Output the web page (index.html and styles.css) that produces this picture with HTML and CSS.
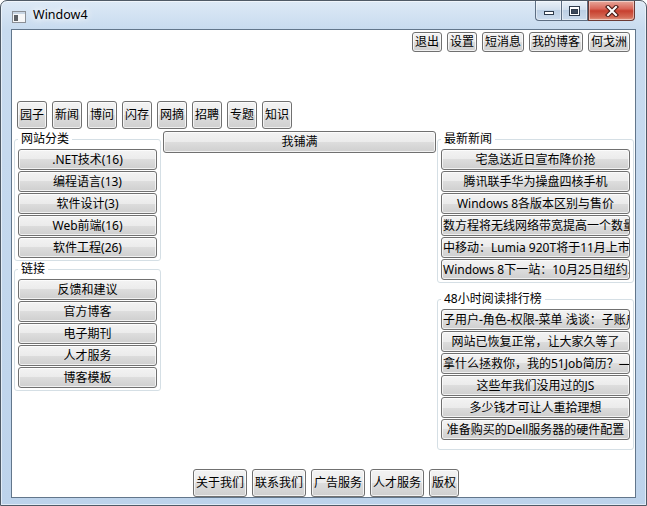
FILE: index.html
```html
<!DOCTYPE html>
<html lang="zh-CN">
<head>
<meta charset="utf-8">
<title>Window4</title>
<link rel="stylesheet" href="styles.css">
</head>
<body>
<div class="window">
  <div class="titlebar">
    <svg class="app-icon" width="14" height="12" viewBox="0 0 14 12">
      <rect x="0.5" y="0.5" width="13" height="11" fill="#f6f7f8" stroke="#8a8f96"/>
      <rect x="1" y="1" width="12" height="2" fill="#c9d6e4"/>
      <rect x="2" y="4" width="4" height="6" fill="#5d6166"/>
    </svg>
    <span class="title">Window4</span>
    <div class="caption">
      <div class="cap cap-min">
        <svg width="12" height="6" viewBox="0 0 12 6"><rect x="1.5" y="1.5" width="9" height="3" fill="#fff" stroke="#2e3b4c"/></svg>
      </div>
      <div class="cap cap-max">
        <svg width="11" height="10" viewBox="0 0 11 10"><rect x="0.5" y="0.5" width="10" height="9" fill="#fff" stroke="#2e3b4c"/><rect x="2.5" y="3.5" width="6" height="4" fill="#3d4a5c" stroke="#2e3b4c"/></svg>
      </div>
      <div class="cap cap-close">
        <svg width="14" height="12" viewBox="0 0 14 12"><path d="M3 2 L11 10 M11 2 L3 10" stroke="#4a1c16" stroke-width="4.2" stroke-linecap="square" fill="none"/><path d="M3 2 L11 10 M11 2 L3 10" stroke="#fff" stroke-width="2" stroke-linecap="square" fill="none"/></svg>
      </div>
    </div>
  </div>
  <div class="client">
    <div class="topbar">
      <div class="btn">退出</div>
      <div class="btn">设置</div>
      <div class="btn">短消息</div>
      <div class="btn">我的博客</div>
      <div class="btn">何戈洲</div>
    </div>
    <div class="nav">
      <div class="btn">园子</div>
      <div class="btn">新闻</div>
      <div class="btn">博问</div>
      <div class="btn">闪存</div>
      <div class="btn">网摘</div>
      <div class="btn">招聘</div>
      <div class="btn">专题</div>
      <div class="btn">知识</div>
    </div>
    <div class="main">
      <div class="col-left">
        <fieldset class="group">
          <legend>网站分类</legend>
          <div class="btn row">.NET技术(16)</div>
          <div class="btn row">编程语言(13)</div>
          <div class="btn row">软件设计(3)</div>
          <div class="btn row">Web前端(16)</div>
          <div class="btn row">软件工程(26)</div>
        </fieldset>
        <fieldset class="group">
          <legend>链接</legend>
          <div class="btn row">反馈和建议</div>
          <div class="btn row">官方博客</div>
          <div class="btn row">电子期刊</div>
          <div class="btn row">人才服务</div>
          <div class="btn row">博客模板</div>
        </fieldset>
      </div>
      <div class="col-mid">
        <div class="btn fill-btn">我铺满</div>
      </div>
      <div class="col-right">
        <fieldset class="group">
          <legend>最新新闻</legend>
          <div class="btn row">宅急送近日宣布降价抢</div>
          <div class="btn row">腾讯联手华为操盘四核手机</div>
          <div class="btn row">Windows 8各版本区别与售价</div>
          <div class="btn row">数方程将无线网络带宽提高一个数量级</div>
          <div class="btn row">中移动：Lumia 920T将于11月上市</div>
          <div class="btn row">Windows 8下一站：10月25日纽约发布</div>
        </fieldset>
        <fieldset class="group group-tall">
          <legend>48小时阅读排行榜</legend>
          <div class="btn row">子用户-角色-权限-菜单 浅谈：子账户设计方案</div>
          <div class="btn row">网站已恢复正常，让大家久等了</div>
          <div class="btn row">拿什么拯救你，我的51Job简历？——求职有感</div>
          <div class="btn row">这些年我们没用过的JS</div>
          <div class="btn row">多少钱才可让人重拾理想</div>
          <div class="btn row">准备购买的Dell服务器的硬件配置</div>
        </fieldset>
      </div>
    </div>
    <div class="footer">
      <div class="btn">关于我们</div>
      <div class="btn">联系我们</div>
      <div class="btn">广告服务</div>
      <div class="btn">人才服务</div>
      <div class="btn">版权</div>
    </div>
  </div>
</div>
</body>
</html>
```
FILE: styles.css
```css
* { box-sizing: border-box; }
html, body { margin: 0; padding: 0; }
body {
  width: 647px;
  height: 506px;
  overflow: hidden;
  background: #fff;
  font-family: "Noto Sans", "Noto Sans CJK SC", sans-serif;
  font-size: 12px;
  color: #000;
}

.window {
  width: 647px;
  height: 506px;
  border: 1px solid #4f5a66;
  border-radius: 7px 7px 0 0;
  background: linear-gradient(180deg, #dde9f6 0, #c8dbef 28px, #bdd3eb 100%);
  box-shadow: inset 0 0 0 1px rgba(255, 255, 255, 0.55);
  display: flex;
  flex-direction: column;
}

.titlebar {
  flex: none;
  height: 28px;
  display: flex;
  align-items: flex-start;
  padding-left: 11px;
}
.app-icon { margin-top: 10px; flex: none; }
.title {
  margin: 6px 0 0 7px;
  line-height: 16px;
  font-size: 12.5px;
  text-shadow: 0 0 6px #fff, 0 0 10px #fff;
}

.caption {
  margin-left: auto;
  margin-right: 11px;
  display: flex;
  height: 20px;
}
.cap {
  height: 20px;
  border: 1px solid #5d6e83;
  border-top: none;
  display: flex;
  align-items: center;
  justify-content: center;
  background: linear-gradient(180deg, #eaf1f8 0%, #d3e0ee 45%, #bccfe4 50%, #cbdbed 100%);
  box-shadow: inset 0 0 0 1px rgba(255, 255, 255, 0.45);
}
.cap-min { width: 26px; border-radius: 0 0 0 4px; border-right: none; padding-top: 5px; }
.cap-max { width: 27px; }
.cap-close {
  width: 47px;
  border-radius: 0 0 4px 0;
  border-color: #6b3a35;
  background: linear-gradient(180deg, #e7a89b 0%, #d9675a 40%, #c7402f 52%, #d46a55 85%, #e29a84 100%);
}

.client {
  margin-left: 10px;
  width: 625px;
  height: 469px;
  border: 1px solid #62768b;
  background: #fff;
  display: flex;
  flex-direction: column;
}

.btn {
  flex: none;
  border: 1px solid #707070;
  border-radius: 3px;
  background: linear-gradient(180deg, #f3f3f3 0%, #ebebeb 50%, #dddddd 50%, #cfcfcf 100%);
  box-shadow: inset 0 0 0 1px rgba(255, 255, 255, 0.7);
  padding: 0 2px;
  font-size: 12px;
  white-space: nowrap;
  overflow: hidden;
  text-align: center;
}

.topbar {
  flex: none;
  height: 71px;
  display: flex;
  justify-content: flex-end;
  align-items: flex-start;
  padding-top: 2px;
}
.topbar .btn { margin-right: 5px; height: 20px; line-height: 18px; }

.nav {
  flex: none;
  height: 30px;
  display: flex;
  align-items: flex-start;
}
.nav .btn { margin-left: 5px; height: 28px; line-height: 26px; }

.main {
  flex: 1;
  min-height: 0;
  display: flex;
  padding: 0 1px 0 2px;
}
.col-left { flex: none; width: 147px; }
.col-mid { flex: 1; min-width: 0; margin: 0 1px 0 2px; }
.col-right { flex: none; width: 197px; }

.fill-btn { height: 22px; line-height: 20px; }

.group {
  margin: 0;
  min-width: 0;
  border: 1px solid #d5dfe5;
  border-radius: 3px;
  padding: 2px 3px 2px 3px;
}
.group legend {
  padding: 0 3px;
  font-size: 12px;
  line-height: 16px;
}
.col-right .group + .group { margin-top: 8px; }
.group-tall { padding-bottom: 9px; }

.row { height: 21px; line-height: 19px; padding: 0 1px; }
.row + .row { margin-top: 1px; }

.footer {
  flex: none;
  height: 28px;
  display: flex;
  justify-content: center;
}
.footer .btn { margin-left: 5px; height: 28px; line-height: 26px; }
```
